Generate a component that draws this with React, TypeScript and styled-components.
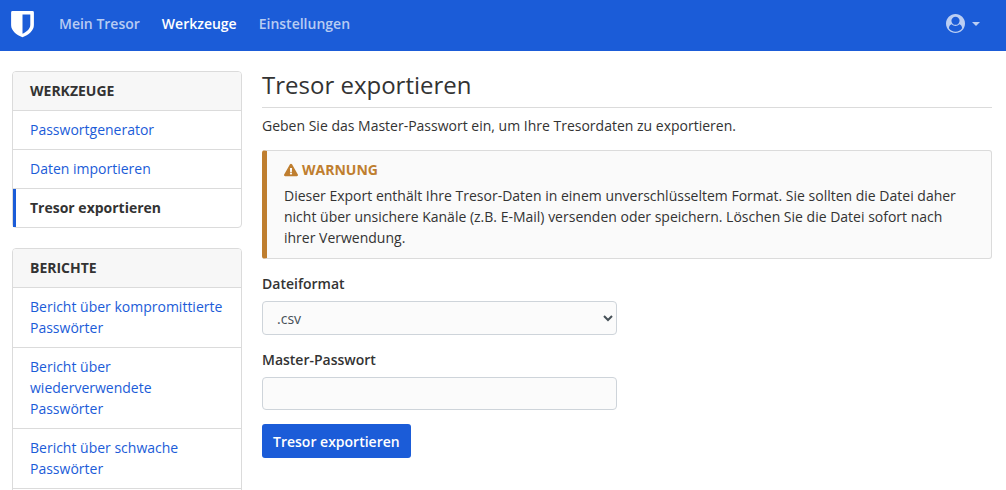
import React, { useState } from "react";
import styled, { createGlobalStyle, css } from "styled-components";
import { FaExclamationTriangle } from "react-icons/fa";

const blue = "#1b5cd8";
const line = "#dbdbdb";

const GlobalStyle = createGlobalStyle`
  *, *::before, *::after { box-sizing: border-box; }
  body {
    margin: 0;
    background: #fff;
    color: #333;
    font-family: "Open Sans", "Liberation Sans", sans-serif;
    font-size: 14px;
    line-height: 21px;
  }
  a { color: ${blue}; text-decoration: none; }
`;

const Navbar = styled.header`
  display: flex;
  align-items: center;
  height: 51px;
  padding: 0 26px 4px 8px;
  background: ${blue};
`;

const Brand = styled.a`
  display: flex;
  margin-right: 22px;
`;

const NavLinks = styled.nav`
  display: flex;
  flex: 1;
  gap: 22px;
`;

const NavLink = styled.a<{ $active?: boolean }>`
  && { color: ${(p) => (p.$active ? "#fff" : "rgba(255, 255, 255, 0.7)")}; }
  font-weight: 600;
`;

const AccountButton = styled.button`
  display: flex;
  align-items: center;
  gap: 7px;
  padding: 0;
  border: 0;
  background: none;
  color: rgba(255, 255, 255, 0.7);
`;

const Page = styled.div`
  display: grid;
  grid-template-columns: repeat(4, 1fr);
  gap: 20px;
  align-items: start;
  padding: 20px 14px 0 12px;
`;

const Sidebar = styled.aside`
  display: grid;
  gap: 20px;
`;

const CardLink = styled.a<{ $active?: boolean }>`
  display: block;
  padding: 8px 17px 9px;
  border-top: 1px solid ${line};
  ${(p) =>
    p.$active &&
    css`
      && { color: #333; }
      font-weight: 700;
      box-shadow: inset 3px 0 0 ${blue};
    `}
`;

const Card = styled.section<{ $open?: boolean }>`
  border: 1px solid ${line};
  border-radius: 4px;
  ${(p) =>
    p.$open &&
    css`
      padding-bottom: 20px;
      ${CardLink}:last-child { border-bottom: 1px solid ${line}; }
    `}
`;

const CardHeader = styled.h2`
  margin: 0;
  padding: 8px 17px 9px;
  border-radius: 3px 3px 0 0;
  background: #f7f7f7;
  font-size: 14px;
  line-height: 21px;
  font-weight: 700;
  text-transform: uppercase;
`;

const Main = styled.main`
  grid-column: span 3;
`;

const Title = styled.h1`
  margin: 0 0 7px;
  padding-bottom: 9px;
  border-bottom: 1px solid ${line};
  font-size: 24px;
  line-height: 27px;
  font-weight: 400;
`;

const Intro = styled.p`
  margin: 0 0 14px;
`;

const Callout = styled.div`
  margin-bottom: 14px;
  padding: 8px 17px 10px;
  border: 1px solid ${line};
  border-left: 5px solid #bf7e2f;
  border-radius: 3px;
  background: #fafafa;
`;

const CalloutTitle = styled.h3`
  display: flex;
  align-items: center;
  gap: 4px;
  margin: 0 0 5px;
  color: #bf7e2f;
  font-size: 14px;
  line-height: 21px;
  font-weight: 700;
  text-transform: uppercase;
`;

const Form = styled.form`
  display: grid;
  grid-template-columns: 1fr 1fr;
  column-gap: 20px;
  row-gap: 14px;
`;

const Field = styled.div`
  display: grid;
  gap: 7px;
  grid-column: 1;
`;

const Label = styled.label`
  font-weight: 600;
`;

const control = css`
  width: 100%;
  border: 1px solid #ced4da;
  border-radius: 4px;
  background: #fbfbfb;
  color: #465057;
  font: inherit;
`;

const Select = styled.select`
  ${control}
  height: 34px;
  padding: 0 0 0 10px;
`;

const Input = styled.input`
  ${control}
  height: 33px;
  padding: 0 10px;
`;

const SubmitButton = styled.button`
  grid-column: 1;
  justify-self: start;
  height: 34px;
  padding: 0 11px;
  border: 0;
  border-radius: 3px;
  background: ${blue};
  color: #fff;
  font: inherit;
  font-weight: 600;
`;

const tools = ["Passwortgenerator", "Daten importieren", "Tresor exportieren"];
const reports = [
  "Bericht über kompromittierte Passwörter",
  "Bericht über wiederverwendete Passwörter",
  "Bericht über schwache Passwörter",
];

const ShieldLogo = () => (
  <svg width="29" height="28" viewBox="0 0 29 28" aria-hidden="true">
    <path
      fill="#fff"
      fillRule="evenodd"
      d="M4.500 1h20a1.400 1.400 0 0 1 1.400 1.400v12.600c0 6-5.500 9.800-11.400 12.300C8.600 24.800 3.100 21 3.100 15V2.400A1.400 1.400 0 0 1 4.500 1zM14.500 4.500v19.300c4.500-2.100 7.800-5 7.800-9V4.500z"
    />
  </svg>
);

const UserIcon = () => (
  <svg width="19" height="19" viewBox="0 0 1792 1792" fill="currentColor" aria-hidden="true">
    <path
      fillRule="evenodd"
      d="M1523 1339q-22-155-87.500-257.500t-184.500-118.500q-67 74-159.500 115.500t-195.500 41.500-195.500-41.500-159.500-115.500q-119 16-184.500 118.500t-87.500 257.500q106 150 271 237.500t356 87.500 356-87.500 271-237.500zm-243-699q0-159-112.500-271.500t-271.500-112.500-271.500 112.500-112.500 271.500 112.500 271.500 271.500 112.500 271.500-112.500 112.500-271.500zm512 256q0 182-71 347.500t-190.500 286-285.500 191.500-349 71-348-71-286-191-191-286-71-348 71-348 191-286 286-191 348-71 348 71 286 191 191 286 71 348z"
    />
  </svg>
);

export default function App() {
  const [password, setPassword] = useState("");
  return (
    <>
      <GlobalStyle />
      <Navbar>
        <Brand href="#" aria-label="Bitwarden">
          <ShieldLogo />
        </Brand>
        <NavLinks>
          <NavLink href="#">Mein Tresor</NavLink>
          <NavLink href="#" $active>Werkzeuge</NavLink>
          <NavLink href="#">Einstellungen</NavLink>
        </NavLinks>
        <AccountButton type="button" aria-label="Konto">
          <UserIcon />
          <svg width="8" height="4" viewBox="0 0 8 4" fill="currentColor" aria-hidden="true">
            <path d="M0 0h8L4 4z" />
          </svg>
        </AccountButton>
      </Navbar>
      <Page>
        <Sidebar>
          <Card>
            <CardHeader>Werkzeuge</CardHeader>
            {tools.map((t) => (
              <CardLink key={t} href="#" $active={t === "Tresor exportieren"}>{t}</CardLink>
            ))}
          </Card>
          <Card $open>
            <CardHeader>Berichte</CardHeader>
            {reports.map((t) => (
              <CardLink key={t} href="#">{t}</CardLink>
            ))}
          </Card>
        </Sidebar>
        <Main>
          <Title>Tresor exportieren</Title>
          <Intro>Geben Sie das Master-Passwort ein, um Ihre Tresordaten zu exportieren.</Intro>
          <Callout>
            <CalloutTitle>
              <FaExclamationTriangle aria-hidden="true" />
              Warnung
            </CalloutTitle>
            Dieser Export enthält Ihre Tresor-Daten in einem unverschlüsseltem Format. Sie sollten die
            Datei daher nicht über unsichere Kanäle (z.B. E-Mail) versenden oder speichern. Löschen Sie
            die Datei sofort nach ihrer Verwendung.
          </Callout>
          <Form onSubmit={(e) => e.preventDefault()}>
            <Field>
              <Label htmlFor="format">Dateiformat</Label>
              <Select id="format">
                <option>.csv</option>
              </Select>
            </Field>
            <Field>
              <Label htmlFor="password">Master-Passwort</Label>
              <Input
                id="password"
                type="password"
                value={password}
                onChange={(e) => setPassword(e.target.value)}
              />
            </Field>
            <SubmitButton type="submit">Tresor exportieren</SubmitButton>
          </Form>
        </Main>
      </Page>
    </>
  );
}
